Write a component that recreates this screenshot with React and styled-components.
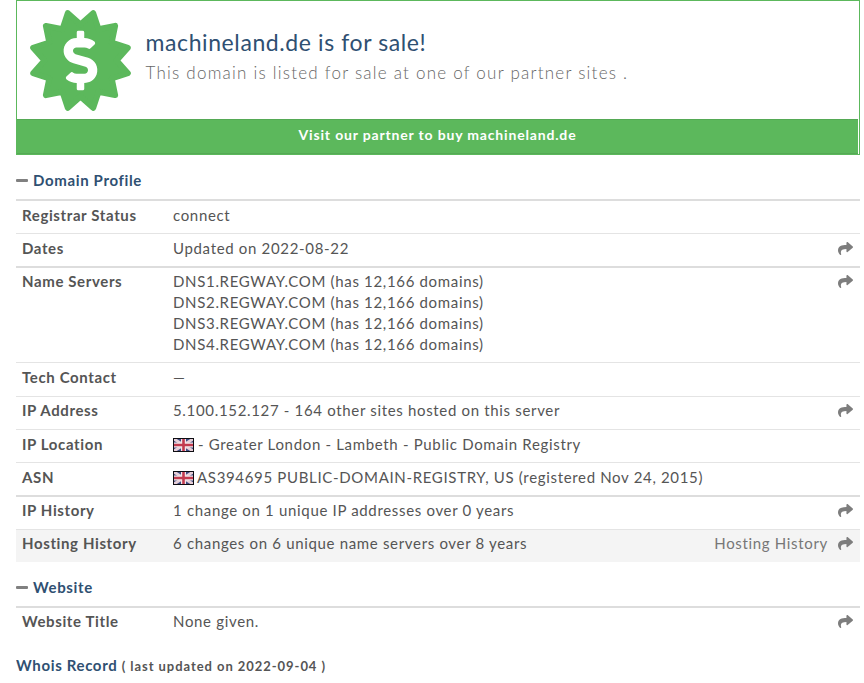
import React from 'react';
import styled, { createGlobalStyle } from 'styled-components';
import { FaShare, FaDollarSign } from 'react-icons/fa';

const Global = createGlobalStyle`
  html, body { margin: 0; padding: 0; background: #fff; }
  body { font-family: Lato, "Liberation Sans", sans-serif; color: #555; overflow: hidden; }
`;
const Page = styled.div`
  width: 844px;
  margin-left: 16px;
  height: 683px;
  overflow: hidden;
`;
const Banner = styled.section`
  height: 155px;
  box-sizing: border-box;
  border: 1px solid #5cb85c;
  padding-right: 1px;
  display: flex;
  flex-direction: column;
`;
const BannerBody = styled.div`
  flex: 1;
  display: flex;
  align-items: flex-start;
  padding: 8px 0 0 12px;
`;
const BannerText = styled.div`
  margin: 20px 0 0 12.5px;
`;
const SaleTitle = styled.h1`
  margin: 0;
  font-size: 23px;
  line-height: 26px;
  font-weight: 400;
  color: #2f5072;
  letter-spacing: 0.6px;
`;
const SaleSub = styled.p`
  margin: 6px 0 0;
  font-size: 17px;
  line-height: 24px;
  font-weight: 300;
  color: #666;
  letter-spacing: 1.23px;
`;
const BuyBar = styled.div`
  height: 35px;
  box-sizing: border-box;
  padding-bottom: 5px;
  background: #5cb85c;
  border-top: 1px solid #55a955;
  border-bottom: 1px solid #55a955;
  color: #fff;
  font-size: 14px;
  font-weight: 700;
  letter-spacing: 0.83px;
  display: flex;
  align-items: center;
  justify-content: center;
`;
const SectionTitle = styled.h2`
  margin: 0;
  font-size: 15px;
  font-weight: 700;
  line-height: 20px;
  color: #2f5072;
  letter-spacing: 0.65px;
  display: flex;
  align-items: center;
  gap: 5px;
  padding-top: 15px;
  padding-bottom: 9px;
  border-bottom: 2px solid #ddd;
`;
const Dash = styled.span`
  width: 12px;
  height: 3px;
  border-radius: 1px;
  background: #808080;
`;
const Row = styled.div`
  display: flex;
  align-items: flex-start;
  box-sizing: border-box;
  padding: ${p => p.$top ?? 4}px 7px ${p => p.$bottom ?? 7}px 6px;
  border-bottom: ${p => p.$heavy ? '2px' : '1px'} solid ${p => p.$heavy ? '#ddd' : '#e4e4e4'};
  background: ${p => p.$shade ? '#f4f4f4' : 'transparent'};
  font-size: 15px;
  line-height: 21px;
  letter-spacing: 0.67px;
  ${p => p.$last ? 'border-bottom: 0;' : ''}
`;
const Label = styled.div`
  width: 151px;
  flex: none;
  font-weight: 700;
  letter-spacing: 0.62px;
  color: #555;
`;
const Value = styled.div`
  flex: 1;
  color: #555;
`;
const Line = styled.div``;
const Action = styled.div`
  display: flex;
  align-items: center;
  gap: 10px;
  color: #777;
  height: 21px;
`;
const ShareIcon = styled(FaShare)`
  width: 15px;
  height: 15px;
  color: #7d7d7d;
`;
const FlagArt = styled.svg`
  width: 21px;
  height: 14px;
  vertical-align: -2px;
  margin-right: ${p => p.$gap}px;
`;
const Whois = styled.div`
  margin-top: 16px;
  line-height: 20px;
  font-size: 15px;
  font-weight: 700;
  letter-spacing: 0.65px;
  color: #2f5072;
`;
const WhoisNote = styled.span`
  font-size: 13px;
  color: #555;
  letter-spacing: 0.95px;
`;

function Badge() {
  const n = 12, cx = 51.5, cy = 51.5, R = 49, r = 36;
  const d = [];
  for (let i = 0; i < n * 2; i++) {
    const a = (Math.PI * i) / n - Math.PI / 2 - Math.PI / n;
    const rad = i % 2 ? r : R;
    d.push(`${(cx + rad * Math.cos(a)).toFixed(1)},${(cy + rad * Math.sin(a)).toFixed(1)}`);
  }
  return (
    <svg width="104" height="104" viewBox="0 0 104 104" style={{ flex: 'none' }}>
      <polygon points={d.join(' ')} fill="#5cb85c" stroke="#5cb85c" strokeWidth="6" strokeLinejoin="round" />
      <FaDollarSign x="21.5" y="21.5" size={60} color="#fff" />
    </svg>
  );
}

function Flag({ gap = 0, id }) {
  return (
    <FlagArt $gap={gap} viewBox="0 0 21 14">
      <defs>
        <filter id={id} x="0" y="0" width="1" height="1">
          <feGaussianBlur stdDeviation="0.7" />
        </filter>
      </defs>
      <rect width="21" height="14" fill="#0d0d12" />
      <g filter={`url(#${id})`}>
        <rect x="1" y="1" width="19" height="12" fill="#3c4a82" />
        <path d="M1 1L20 13M20 1L1 13" stroke="#e6cfd8" strokeWidth="3" />
        <path d="M10.5 1V13M1 7H20" stroke="#f2e8ea" strokeWidth="5" />
        <path d="M10.5 1V13M1 7H20" stroke="#c23a50" strokeWidth="2.6" />
      </g>
    </FlagArt>
  );
}

const Share = ({ label }) => (
  <Action>
    {label}
    <ShareIcon />
  </Action>
);

export default function App() {
  return (
    <Page>
      <Global />
      <Banner>
        <BannerBody>
          <Badge />
          <BannerText>
            <SaleTitle>machineland.de is for sale!</SaleTitle>
            <SaleSub>This domain is listed for sale at one of our partner sites .</SaleSub>
          </BannerText>
        </BannerBody>
        <BuyBar>Visit our partner to buy machineland.de</BuyBar>
      </Banner>

      <SectionTitle><Dash />Domain Profile</SectionTitle>
      <Row><Label>Registrar Status</Label><Value>connect</Value></Row>
      <Row $heavy><Label>Dates</Label><Value>Updated on 2022-08-22</Value><Share /></Row>
      <Row $top={3} $bottom={7}>
        <Label>Name Servers</Label>
        <Value>
          <Line>DNS1.REGWAY.COM (has 12,166 domains)</Line>
          <Line>DNS2.REGWAY.COM (has 12,166 domains)</Line>
          <Line>DNS3.REGWAY.COM (has 12,166 domains)</Line>
          <Line>DNS4.REGWAY.COM (has 12,166 domains)</Line>
        </Value>
        <Share />
      </Row>
      <Row $bottom={8}><Label>Tech Contact</Label><Value>—</Value></Row>
      <Row $top={3} $bottom={8}><Label>IP Address</Label><Value>5.100.152.127 - 164 other sites hosted on this server</Value><Share /></Row>
      <Row><Label>IP Location</Label><Value><Flag gap={4} id="flag-location" />- Greater London - Lambeth - Public Domain Registry</Value></Row>
      <Row $heavy><Label>ASN</Label><Value><Flag gap={3} id="flag-asn" />AS394695 PUBLIC-DOMAIN-REGISTRY, US (registered Nov 24, 2015)</Value></Row>
      <Row $top={3} $bottom={8}><Label>IP History</Label><Value>1 change on 1 unique IP addresses over 0 years</Value><Share /></Row>
      <Row $shade $last $top={3} $bottom={8}><Label>Hosting History</Label><Value>6 changes on 6 unique name servers over 8 years</Value><Share label="Hosting History" /></Row>

      <SectionTitle><Dash />Website</SectionTitle>
      <Row $last $top={3}><Label>Website Title</Label><Value>None given.</Value><Share /></Row>

      <Whois>Whois Record <WhoisNote>( last updated on 2022-09-04 )</WhoisNote></Whois>
    </Page>
  );
}
